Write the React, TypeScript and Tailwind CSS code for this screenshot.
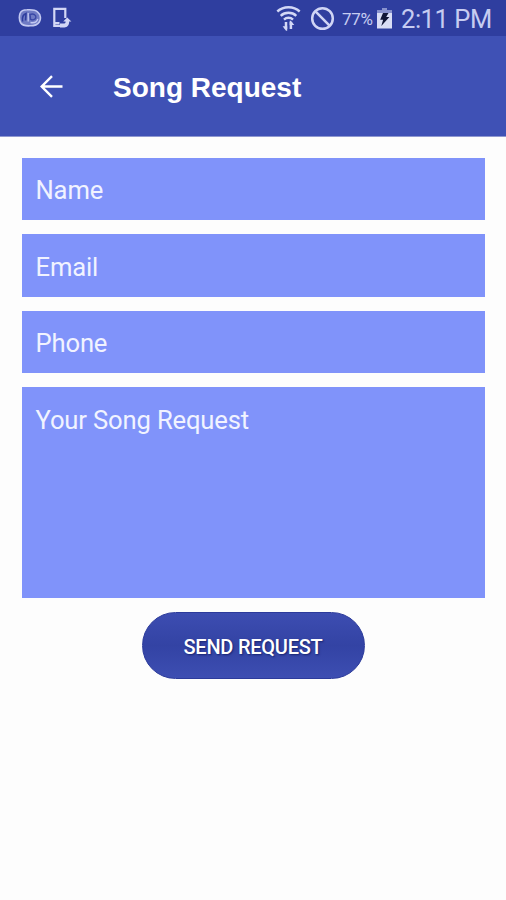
import { useState } from 'react'

const FIELDS = [
  { name: 'name', label: 'Name', type: 'text' },
  { name: 'email', label: 'Email', type: 'email' },
  { name: 'phone', label: 'Phone', type: 'tel' },
]

function FaceIcon() {
  return (
    <svg className="h-[20px] w-[24px]" viewBox="0 0 24 20" fill="none" stroke="#c3c9f1">
      <path d="M2 5.5C3.2 2.6 6 1.8 9 1.8C14 1.4 17 1.6 19.5 3.8C22.8 6.5 23.2 11 21.3 14C19.5 17 16 17.8 12 17.8C8 18 4.5 17.6 2.8 15C1.2 12 1 8.5 2 5.5Z" fill="#6f7bc4" strokeWidth="1.6" />
      <path d="M4.6 13.5C4 9.5 5 6.5 8 5.5L7.5 12.5" stroke="#2f3e9f" strokeWidth="1.6" />
      <path d="M12 6.5C15.5 5.2 18.5 7 17.8 9.8C17.2 11.8 14.5 12.3 12.6 11.4Z" stroke="#3a48a6" strokeWidth="1.4" />
      <path d="M10.2 5V13.5M12.5 14.5C16 15.2 18.8 14 19.8 11" strokeWidth="1.3" />
    </svg>
  )
}

function DeviceIcon() {
  return (
    <svg className="h-[22px] w-[20px]" viewBox="0 0 20 22">
      <path d="M13.3 11V1.9H2.3V18.9H8M2.3 16.2H7.5" fill="none" stroke="#d3d7f5" strokeWidth="2.2" />
      <path d="M8 16.6H12.4C13.2 16.6 13.6 15.8 13.6 14.6H11.2L15.2 10.4L19.4 14.6H17.2C17.2 18.2 15.4 20.4 12.4 20.4H8Z" fill="#d3d7f5" />
    </svg>
  )
}

function WifiIcon() {
  return (
    <svg className="h-[27px] w-[25px]" viewBox="0 0 25 27" fill="none" stroke="#d3d8f6">
      <path d="M1.3 6.5C7.5.9 17.5.9 23.7 6.5M4.7 10.8C9 6.8 16 6.8 20.3 10.8M8 14.6C10.5 12.2 14.5 12.2 17 14.6" strokeWidth="2.4" />
      <path d="M10 17V24M14.9 17V24" strokeWidth="2.5" />
      <path d="M6.6 21.2H11.2V25.8H10ZM18.3 20H13.7V15.8H14.9Z" fill="#d3d8f6" stroke="none" />
    </svg>
  )
}

function BlockedIcon() {
  return (
    <svg className="size-[25px]" viewBox="0 0 25 25" fill="none" stroke="#d0d5f5" strokeWidth="2.5">
      <circle cx="12.5" cy="12.5" r="10.3" />
      <path d="M5.2 5.2L19.8 19.8" />
    </svg>
  )
}

function BatteryIcon() {
  return (
    <svg className="h-[22px] w-[15px]" viewBox="0 0 15 22">
      <path d="M5 1H10V3.5H15V21.5H0V3.5H5Z" fill="#d9ddf5" />
      <path d="M5 1H10V3.5H15V6H0V3.5H5Z" fill="#8992ce" />
      <path d="M6 6H11.5L9.2 10H12.4L4.3 19L6.1 12.7H3.2Z" fill="#111637" />
    </svg>
  )
}

function StatusBar() {
  return (
    <div className="flex h-9 items-center bg-[#2f3e9f] pr-[14px] pl-[18px] text-[#c6ccf1]">
      <FaceIcon />
      <div className="ml-[10px]">
        <DeviceIcon />
      </div>
      <div className="ml-auto flex items-center">
        <WifiIcon />
        <div className="ml-[9px]">
          <BlockedIcon />
        </div>
        <span className="ml-[7px] w-[32px] pt-[2px] text-[17px] leading-none tracking-[-0.3px]">77%</span>
        <div className="ml-[3px]">
          <BatteryIcon />
        </div>
        <span className="ml-[9px] w-[91px] pt-[3px] text-[25.5px] leading-none tracking-[-0.45px] whitespace-nowrap">2:11 PM</span>
      </div>
    </div>
  )
}

export default function App() {
  const [form, setForm] = useState<Record<string, string>>({})

  const update = (name: string, value: string) => setForm((prev) => ({ ...prev, [name]: value }))

  return (
    <div className="h-[900px] w-[506px] overflow-hidden bg-[#fdfdfd] font-['Roboto',sans-serif]">
      <StatusBar />

      <header className="flex h-[101px] items-center border-b border-[#8f98d0] bg-[#3f51b5] text-white">
        <button type="button" aria-label="Back" className="ml-[39px]">
          <svg className="size-[25px]" viewBox="0 0 25 25" fill="none" stroke="currentColor" strokeWidth="2.4">
            <path d="M23.5 12.5H2.5M13 2.2L2.7 12.5L13 22.8" />
          </svg>
        </button>
        <h1 className="ml-[49px] pt-[3px] font-['Liberation_Sans',sans-serif] text-[28px] leading-8 font-bold">Song Request</h1>
      </header>

      <form className="flex flex-col items-center px-[21.5px] pt-[21px]" onSubmit={(e) => e.preventDefault()}>
        <div className="flex w-full flex-col gap-[14px]">
          {FIELDS.map((field) => (
            <input
              key={field.name}
              type={field.type}
              placeholder={field.label}
              value={form[field.name] ?? ''}
              onChange={(e) => update(field.name, e.target.value)}
              className="h-[62.4px] w-full bg-[#8093fa] px-[14px] pt-[2px] text-[25.6px] tracking-[-0.15px] text-white outline-none placeholder:text-[#f1f3ff]"
            />
          ))}
          <textarea
            placeholder="Your Song Request"
            value={form.message ?? ''}
            onChange={(e) => update('message', e.target.value)}
            className="block h-[211px] w-full resize-none bg-[#8093fa] px-[14px] pt-[17px] text-[25.6px] leading-8 tracking-[-0.15px] text-white outline-none placeholder:text-[#f1f3ff]"
          />
        </div>

        <button
          type="submit"
          className="mt-[14px] h-[67px] w-[223px] rounded-full border border-[#2c3b9b] bg-linear-to-b from-[#3d4db1] via-[#3343a4] to-[#3d4eb2] pt-[2px] text-[20px] font-medium tracking-[-0.25px] text-white [text-shadow:1px_1px_2px_#17236f]"
        >
          SEND REQUEST
        </button>
      </form>
    </div>
  )
}
